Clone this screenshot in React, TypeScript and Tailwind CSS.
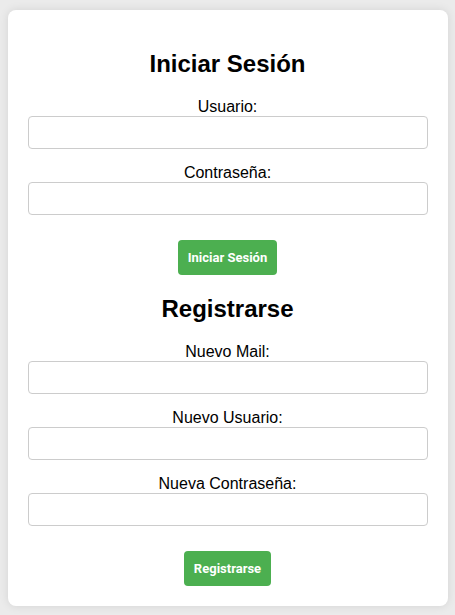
import React from "react";

function Field({ label, type = "text", last = false }: { label: string; type?: string; last?: boolean }) {
  return (
    <div className={last ? "mb-0" : "mb-[15px]"}>
      <label className="block text-center text-base leading-[18px] text-black">{label}</label>
      <input
        type={type}
        className="block w-full h-[33px] px-2 border border-[#cccccc] rounded-[4px] bg-white text-[13px] outline-none"
      />
    </div>
  );
}

function SubmitButton({ children }: { children: React.ReactNode }) {
  return (
    <div className="flex justify-center mt-[25px]">
      <button
        className="h-[35px] px-[10px] bg-[#4caf50] text-white text-[13px] font-bold rounded-[4px]"
        style={{ fontFamily: "Roboto, Arial, sans-serif" }}
      >
        {children}
      </button>
    </div>
  );
}

export default function App() {
  return (
    <main
      className="min-h-screen bg-[#ebebeb] flex justify-center pt-[10px]"
      style={{ fontFamily: '"Liberation Sans", Arial, sans-serif' }}
    >
      <div className="w-[440px] h-fit bg-white rounded-lg shadow-[0_0_10px_rgba(0,0,0,0.1)] p-5">
        {/* Login */}
        <form>
          <h2 className="mt-5 mb-5 text-2xl leading-[28px] font-bold text-center text-black">Iniciar Sesión</h2>
          <Field label="Usuario:" />
          <Field label="Contraseña:" type="password" last />
          <SubmitButton>Iniciar Sesión</SubmitButton>
        </form>

        {/* Register */}
        <form>
          <h2 className="mt-5 mb-5 text-2xl leading-[28px] font-bold text-center text-black">Registrarse</h2>
          <Field label="Nuevo Mail:" type="email" />
          <Field label="Nuevo Usuario:" />
          <Field label="Nueva Contraseña:" type="password" last />
          <SubmitButton>Registrarse</SubmitButton>
        </form>
      </div>
    </main>
  );
}
